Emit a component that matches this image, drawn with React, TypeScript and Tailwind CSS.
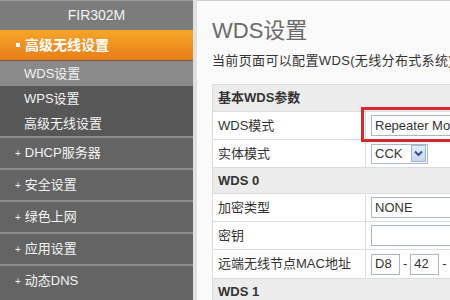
import React from "react";

const font = { fontFamily: '"Liberation Sans", Arial, "Noto Sans CJK SC", sans-serif' };

const subItems = [
  { label: "WDS设置", active: true },
  { label: "WPS设置", active: false },
  { label: "高级无线设置", active: false },
];

const mainItems = ["DHCP服务器", "安全设置", "绿色上网", "应用设置", "动态DNS"];

function Chevron() {
  return (
    <span className="flex h-[17px] w-[15px] items-center justify-center border border-[#9fb6d6] bg-gradient-to-b from-[#e4edf9] to-[#c4d5ee]">
      <svg width="9" height="7" viewBox="0 0 9 7">
        <path d="M1 1.5 L4.5 5 L8 1.5" fill="none" stroke="#2f5597" strokeWidth="2" />
      </svg>
    </span>
  );
}

function Row({ label, children, h = "h-[28px]" }: { label: string; children?: React.ReactNode; h?: string }) {
  return (
    <div className={`grid grid-cols-[153px_1fr] ${h} border-b border-[#dcdcdc]`}>
      <div className="flex items-center border-r border-[#dcdcdc] pl-[5px] text-[13px] text-[#333]">{label}</div>
      <div className="relative flex items-center pl-[5px]">{children}</div>
    </div>
  );
}

function Section({ title, h = "h-[27px]" }: { title: string; h?: string }) {
  return (
    <div className={`flex ${h} items-center border-b border-[#dcdcdc] bg-[#ececec] pl-[5px] text-[13px] font-bold text-[#333]`}>
      {title}
    </div>
  );
}

export default function App() {
  return (
    <div className="flex h-[300px] w-[450px] overflow-hidden bg-[#fafafa]" style={font}>
      {/* sidebar */}
      <div className="flex w-[193px] shrink-0 flex-col bg-[#646464]">
        <div className="flex h-[30px] items-center justify-center border-t border-[#9a9a9a] bg-[#7c7c7c] text-[14px] text-[#f2f2f2]">
          FIR302M
        </div>
        <div className="flex h-[31px] items-center gap-[5px] border-b border-[#7a5a3a] bg-gradient-to-b from-[#f6a52a] to-[#e77f18] pl-[16px] text-[14px] font-bold text-white">
          <span className="h-[4px] w-[4px] bg-white" />
          高级无线设置
        </div>
        {subItems.map((s) => (
          <div
            key={s.label}
            className={`flex h-[25px] items-center pl-[24px] text-[13px] text-[#f3f3f3] ${s.active ? "bg-[#8a8a8a]" : "bg-[#575757]"}`}
          >
            {s.label}
          </div>
        ))}
        {mainItems.map((m) => (
          <div key={m} className="flex h-[32px] items-center gap-[4px] border-t-2 border-[#8c8c8c] pl-[15px] text-[13px] text-[#f3f3f3]">
            <span className="text-[10px]">+</span>
            {m}
          </div>
        ))}
      </div>
      <div className="w-[4px] shrink-0 bg-[#e0e0e0]" />

      {/* content */}
      <div className="flex min-w-0 flex-1 flex-col border-t border-[#cfcfcf] pl-[15px]">
        <h1 className="mt-[15px] h-[30px] text-[22px] leading-[30px] text-[#6a6a6a]">WDS设置</h1>
        <p className="mt-[7px] whitespace-nowrap text-[13px] leading-[16px] tracking-[0.35px] text-[#333]">
          当前页面可以配置WDS(无线分布式系统)功能,它可以扩展无线网络覆盖范围
        </p>
        <div className="mt-[15px] w-[320px] shrink-0 border-l border-t border-[#dcdcdc] bg-white">
          <Section title="基本WDS参数" />
          <Row label="WDS模式">
            <div className="absolute left-[-5px] top-[-5px] h-[35px] w-[120px] border-[3px] border-[#d8262b]" />
            <div className="flex h-[21px] w-[110px] items-center border border-[#a9b8c8] bg-white pl-[3px] text-[13px] text-[#333]">
              Repeater Mode
            </div>
          </Row>
          <Row label="实体模式">
            <div className="flex h-[20px] w-[57px] items-center justify-between border border-[#a9b8c8] bg-white pl-[3px] pr-[1px] text-[13px] text-[#333]">
              CCK
              <Chevron />
            </div>
          </Row>
          <Section title="WDS 0" h="h-[26px]" />
          <Row label="加密类型">
            <div className="flex h-[21px] w-[110px] items-center border border-[#a9b8c8] bg-white pl-[3px] text-[13px] text-[#333]">
              NONE
            </div>
          </Row>
          <Row label="密钥">
            <div className="h-[21px] w-[110px] border border-[#a9b8c8] bg-white" />
          </Row>
          <Row label="远端无线节点MAC地址" h="h-[29px]">
            <div className="flex items-center gap-[3px] text-[13px] text-[#333]">
              <div className="flex h-[21px] w-[29px] items-center border border-[#a9b8c8] bg-white pl-[3px]">D8</div>
              <span>-</span>
              <div className="flex h-[21px] w-[29px] items-center border border-[#a9b8c8] bg-white pl-[3px]">42</div>
              <span>-</span>
              <div className="flex h-[21px] w-[29px] items-center border border-[#a9b8c8] bg-white pl-[3px]">A5</div>
            </div>
          </Row>
          <Section title="WDS 1" />
        </div>
      </div>
    </div>
  );
}
